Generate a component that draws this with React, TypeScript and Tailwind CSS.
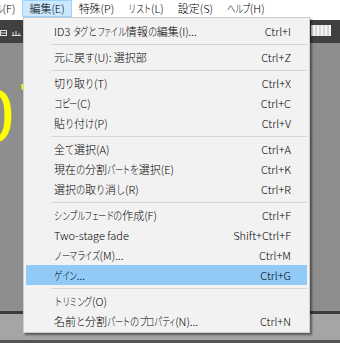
import React from "react";

type Item =
  | { kind: "item"; label: string; shortcut?: string; active?: boolean }
  | { kind: "sep" };

const items: Item[] = [
  { kind: "item", label: "ID3 タグとファイル情報の編集(I)...", shortcut: "Ctrl+I" },
  { kind: "sep" },
  { kind: "item", label: "元に戻す(U): 選択部", shortcut: "Ctrl+Z" },
  { kind: "sep" },
  { kind: "item", label: "切り取り(T)", shortcut: "Ctrl+X" },
  { kind: "item", label: "コピー(C)", shortcut: "Ctrl+C" },
  { kind: "item", label: "貼り付け(P)", shortcut: "Ctrl+V" },
  { kind: "sep" },
  { kind: "item", label: "全て選択(A)", shortcut: "Ctrl+A" },
  { kind: "item", label: "現在の分割パートを選択(E)", shortcut: "Ctrl+K" },
  { kind: "item", label: "選択の取り消し(R)", shortcut: "Ctrl+R" },
  { kind: "sep" },
  { kind: "item", label: "シンプルフェードの作成(F)", shortcut: "Ctrl+F" },
  { kind: "item", label: "Two-stage fade", shortcut: "Shift+Ctrl+F" },
  { kind: "item", label: "ノーマライズ(M)...", shortcut: "Ctrl+M" },
  { kind: "item", label: "ゲイン...", shortcut: "Ctrl+G", active: true },
  { kind: "sep" },
  { kind: "item", label: "トリミング(O)" },
  { kind: "item", label: "名前と分割パートのプロパティ(N)...", shortcut: "Ctrl+N" },
];

const menuBar = [
  { label: "ル(F)", active: false },
  { label: "編集(E)", active: true },
  { label: "特殊(P)", active: false },
  { label: "リスト(L)", active: false },
  { label: "設定(S)", active: false },
  { label: "ヘルプ(H)", active: false },
];

type CharKind = "small" | "kata" | "hira" | "other";

function kindOf(ch: string): CharKind {
  if ("ァィゥェォャュョッ".includes(ch)) return "small";
  const c = ch.charCodeAt(0);
  if (c >= 0x30a0 && c <= 0x30ff) return "kata";
  if (c >= 0x3040 && c <= 0x309f) return "hira";
  return "other";
}

function Ja({ text }: { text: string }) {
  const parts: React.ReactNode[] = [];
  let buf = "";
  const chars = Array.from(text);
  chars.forEach((ch, i) => {
    const k = kindOf(ch);
    if (k === "other") {
      buf += ch;
      return;
    }
    if (buf) {
      parts.push(<span key={"t" + i}>{buf}</span>);
      buf = "";
    }
    if (k === "kata") {
      parts.push(
        <span key={i} className="inline-block w-[7.6px]">
          <span className="inline-block origin-left scale-x-[0.76]">{ch}</span>
        </span>
      );
    } else if (k === "small") {
      parts.push(
        <span key={i} className="inline-block w-[6px]">
          <span className="inline-block origin-left scale-x-[0.62]">{ch}</span>
        </span>
      );
    } else {
      parts.push(
        <span key={i} className="inline-block w-[9px]">
          <span className="inline-block origin-left scale-x-[0.84]">{ch}</span>
        </span>
      );
    }
  });
  if (buf) parts.push(<span key="end">{buf}</span>);
  return <span className="whitespace-pre">{parts}</span>;
}

export default function App() {
  return (
    <div className="relative w-[340px] h-[343px] overflow-hidden flex flex-col bg-[#8e8e8e] text-[11px] font-light text-black [font-family:'Noto_Sans_CJK_JP',sans-serif]">
      {/* Menu bar */}
      <div className="h-[20px] bg-white flex items-start shrink-0">
        {menuBar.map((m, i) => (
          <div
            key={i}
            className={
              m.active
                ? "h-[17px] px-[6px] flex items-center bg-[#cce8ff] border border-[#99d1ff] whitespace-nowrap"
                : i === 0
                ? "h-[17px] pl-0 pr-[6px] -ml-[6px] flex items-center border border-transparent whitespace-nowrap"
                : "h-[17px] px-[6px] flex items-center border border-transparent whitespace-nowrap"
            }
          >
            <Ja text={m.label} />
          </div>
        ))}
      </div>

      {/* Toolbar */}
      <div className="h-[23px] bg-[#404040] shrink-0 flex items-center justify-between">
        <div className="flex items-center gap-[4px] pl-0">
          <svg width="8" height="6" viewBox="0 0 8 6" className="mt-[2px]">
            <rect x="0.5" y="0.5" width="6" height="5" fill="none" stroke="#e0e0e0" />
            <line x1="0" y1="3" x2="7" y2="3" stroke="#e0e0e0" />
          </svg>
          <svg width="9" height="6" viewBox="0 0 9 6" className="mt-[2px]">
            <path d="M1 5 L1 2 M4 5 L4 1 M7 5 L7 3 M0 5.5 L9 5.5" stroke="#e0e0e0" />
          </svg>
          <svg width="6" height="6" viewBox="0 0 6 6" className="mt-[2px]">
            <rect x="0.5" y="0.5" width="5" height="5" fill="none" stroke="#e0e0e0" />
          </svg>
        </div>
        <div className="flex h-[11px] mr-[9px] mt-[-3px] bg-[#9a9a9a]">
          {[0, 1, 2, 3, 4].map((k) => (
            <div key={k} className="flex">
              <div className="w-[2px] bg-[#d8d8d8]" />
              <div className="w-[2px] bg-[#f4f4f4]" />
            </div>
          ))}
        </div>
      </div>

      {/* Main display area */}
      <div className="relative flex-1 bg-[#8e8e8e]">
        <span className="absolute left-[-28px] top-[35px] leading-none text-[#ffff00] text-[76px] [font-family:'Liberation_Sans',sans-serif]">
          0
        </span>
        <span className="absolute left-[20px] top-[37px] leading-none text-[#ffff00] text-[26px] [font-family:'Liberation_Sans',sans-serif]">
          '
        </span>
      </div>

      <div className="h-[3px] bg-[#3c3c3c] shrink-0" />
      <div className="h-[26px] bg-[#a5a5a5] shrink-0" />
      <div className="h-[3px] bg-[#555555] shrink-0" />

      {/* Dropdown menu */}
      <div className="absolute left-[23px] top-[17px] w-[287px] bg-[#f2f2f2] border border-[#cccccc] pt-[3px] pb-[1px] px-[2px] shadow-[2px_2px_2px_rgba(0,0,0,0.45)]">
        {items.map((it, i) =>
          it.kind === "sep" ? (
            <div key={i} className="h-[6px] flex items-center pl-[25px]">
              <div className="h-px w-full bg-[#d7d7d7]" />
            </div>
          ) : (
            <div
              key={i}
              className={
                it.active
                  ? "h-[20px] flex items-center justify-between pl-[28px] pr-[16px] bg-[#91c9f7] whitespace-nowrap"
                  : "h-[20px] flex items-center justify-between pl-[28px] pr-[16px] whitespace-nowrap"
              }
            >
              <Ja text={it.label} />
              <span>{it.shortcut ?? ""}</span>
            </div>
          )
        )}
      </div>
    </div>
  );
}
